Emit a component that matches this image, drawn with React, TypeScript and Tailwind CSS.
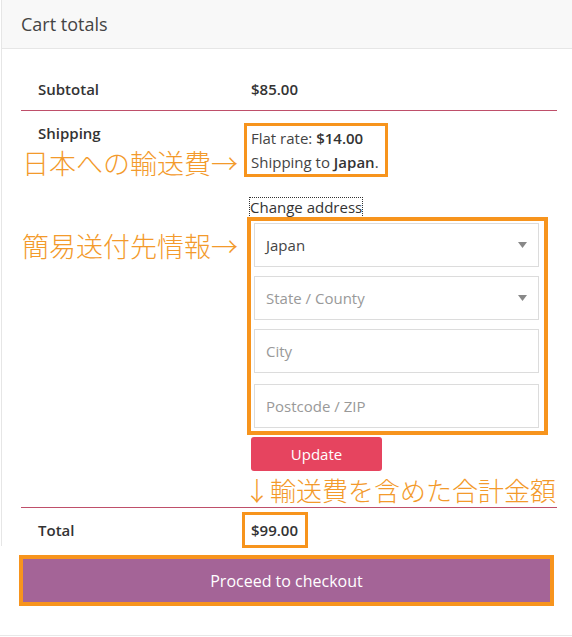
const Caret = () => (
  <svg width="9" height="6" viewBox="0 0 9 6" className="shrink-0">
    <polygon points="0,0 9,0 4.5,6" fill="#888" />
  </svg>
);

const App = () => {
  return (
    <div className="relative w-[572px] h-[637px] bg-white overflow-hidden font-['Open_Sans',sans-serif] text-[15px] text-[#333]">
      {/* cart totals card */}
      <div className="ml-[1px] border-l border-[#e6e6e6]">
        <div className="h-[49px] bg-[#f8f8f8] border-b border-[#e6e6e6] pl-[19px] flex items-center text-[18px] text-[#444]">
          Cart totals
        </div>

        <div className="pl-[19px] pr-[15px] pt-[19px]">
          {/* subtotal */}
          <div className="flex items-center h-[43px] border-b border-[#bf4f6a]">
            <div className="w-[230px] pl-[17px] font-semibold">Subtotal</div>
            <div className="font-semibold">$85.00</div>
          </div>

          {/* shipping */}
          <div className="flex pt-[12px] pb-[36px] border-b border-[#bf4f6a]">
            <div className="w-[230px] pl-[17px] font-semibold leading-[20px]">Shipping</div>
            <div className="flex flex-col items-start">
              <div className="ml-[-7px] border-[3px] border-[#f7941d] px-[4px] pr-[6px] leading-[24px] text-[#444]">
                <div>
                  Flat rate: <span className="font-semibold text-[#333]">$14.00</span>
                </div>
                <div>
                  Shipping to <span className="font-semibold text-[#333]">Japan</span>.
                </div>
              </div>

              <a className="mt-[21px] ml-[-1px] outline outline-1 outline-dotted outline-[#333] leading-[19px] text-[#333]">
                Change address
              </a>

              <div className="ml-[-4px] w-[301px] border-[4px] border-[#f7941d] pl-[3px] pr-[5px] pt-[2px] pb-[3px] flex flex-col">
                <div className="h-[44px] border border-[#dcdcdc] px-[11px] flex items-center justify-between text-[#444]">
                  <span>Japan</span>
                  <Caret />
                </div>
                <div className="mt-[9px] h-[44px] border border-[#dcdcdc] px-[11px] flex items-center justify-between text-[#999]">
                  <span>State / County</span>
                  <Caret />
                </div>
                <div className="mt-[9px] h-[44px] border border-[#dcdcdc] px-[11px] flex items-center text-[#999]">
                  City
                </div>
                <div className="mt-[11px] h-[44px] border border-[#dcdcdc] px-[11px] flex items-center text-[#999]">
                  Postcode / ZIP
                </div>
              </div>

              <button className="mt-[2px] w-[131px] h-[34px] rounded-[3px] bg-[#e6445f] text-white text-[15px]">
                Update
              </button>
            </div>
          </div>

          {/* total */}
          <div className="flex items-start h-[38px]">
            <div className="w-[230px] pl-[17px] pt-[12px] leading-[20px] font-semibold">Total</div>
            <div className="ml-[-9px] mt-[4px] border-[3px] border-[#f7941d] pl-[6px] pr-[7px] leading-[30px] font-semibold bg-white">
              $99.00
            </div>
          </div>
        </div>
      </div>

      {/* checkout */}
      <div className="ml-[19px] mt-[9px] w-[535px] border-[4px] border-[#f7941d]">
        <button className="w-full h-[43px] bg-[#a46497] text-white text-[16px]">Proceed to checkout</button>
      </div>

      <div className="mt-[29px] border-b border-[#e8e8e8]" />

      {/* annotations */}
      <div className="absolute left-[22px] top-[149px] text-[27px] leading-[27px] font-light text-[#f39a2b] font-['Noto_Sans_CJK_JP',sans-serif]">
        日本への輸送費→
      </div>
      <div className="absolute left-[22px] top-[232px] text-[27px] leading-[27px] font-light text-[#f39a2b] font-['Noto_Sans_CJK_JP',sans-serif]">
        簡易送付先情報→
      </div>
      <div className="absolute left-[244px] top-[477px] text-[26px] leading-[26px] font-light text-[#f39a2b] font-['Noto_Sans_CJK_JP',sans-serif] whitespace-nowrap">
        ↓輸送費を含めた合計金額
      </div>
    </div>
  );
};

export default App;
